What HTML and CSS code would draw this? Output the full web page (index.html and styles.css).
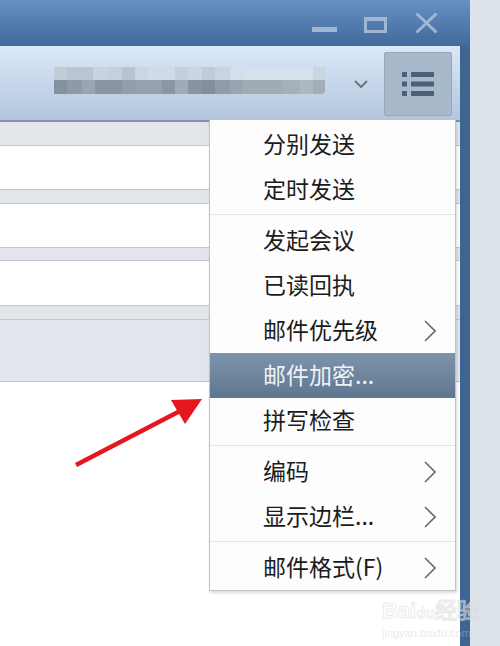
FILE: index.html
```html
<!DOCTYPE html>
<html lang="zh-CN">
<head>
  <meta charset="UTF-8" />
  <meta name="viewport" content="width=device-width, initial-scale=1.0" />
  <title>写邮件 - 更多选项</title>
  <link rel="stylesheet" href="styles.css">
</head>
<body>
  <div class="screen">
    <div class="window">
      <!-- Title bar with window buttons -->
      <div class="titlebar">
        <svg class="ctrl ctrl-min" width="28" height="26" viewBox="0 0 28 26">
          <rect x="2" y="17" width="25" height="5" />
        </svg>
        <svg class="ctrl ctrl-max" width="28" height="26" viewBox="0 0 28 26">
          <rect x="5.5" y="8.5" width="20" height="13" fill="none" stroke-width="3" />
          <rect x="4" y="7" width="23" height="4" />
        </svg>
        <svg class="ctrl ctrl-close" width="28" height="26" viewBox="0 0 28 26">
          <path d="M4.5 3.5 L24.5 22.5 M24.5 3.5 L4.5 22.5" fill="none" stroke-width="3" />
        </svg>
      </div>

      <div class="frame">
        <div class="main">
          <div class="toolbar">
            <div class="account">
              <div class="mosaic mosaic-top"></div>
              <div class="mosaic mosaic-bottom"></div>
            </div>
            <svg class="caret" width="14" height="8" viewBox="0 0 14 8">
              <path d="M1 1 L7 7 L13 1" fill="none" stroke="#6b7684" stroke-width="2" />
            </svg>
            <button class="menu-btn" title="更多">
              <svg width="66" height="62" viewBox="0 0 66 62">
                <rect x="17" y="19" width="5" height="5" />
                <rect x="26" y="19" width="23" height="5" />
                <rect x="17" y="28.5" width="5" height="5" />
                <rect x="26" y="28.5" width="23" height="5" />
                <rect x="17" y="38" width="5" height="5" />
                <rect x="26" y="38" width="23" height="5" />
              </svg>
            </button>
          </div>

          <div class="strip strip-first"></div>
          <div class="field"></div>
          <div class="strip"></div>
          <div class="field"></div>
          <div class="strip strip-thin"></div>
          <div class="field field-tall"></div>
          <div class="strip"></div>
          <div class="panel"></div>
          <div class="editor"></div>
        </div>
      </div>
    </div>
    <div class="desktop"></div>
  </div>

  <!-- Drop-down menu -->
  <ul class="menu">
    <li class="item">分别发送</li>
    <li class="item">定时发送</li>
    <li class="sep"></li>
    <li class="item">发起会议</li>
    <li class="item">已读回执</li>
    <li class="item">邮件优先级
      <svg class="chev" width="12" height="22" viewBox="0 0 12 22"><path d="M1 1 L11 11 L1 21" /></svg>
    </li>
    <li class="item active">邮件加密...</li>
    <li class="item">拼写检查</li>
    <li class="sep"></li>
    <li class="item">编码
      <svg class="chev" width="12" height="22" viewBox="0 0 12 22"><path d="M1 1 L11 11 L1 21" /></svg>
    </li>
    <li class="item">显示边栏...
      <svg class="chev" width="12" height="22" viewBox="0 0 12 22"><path d="M1 1 L11 11 L1 21" /></svg>
    </li>
    <li class="sep"></li>
    <li class="item">邮件格式(F)
      <svg class="chev" width="12" height="22" viewBox="0 0 12 22"><path d="M1 1 L11 11 L1 21" /></svg>
    </li>
  </ul>

  <!-- Red pointer arrow -->
  <svg class="arrow" width="500" height="646" viewBox="0 0 500 646">
    <line x1="76" y1="465" x2="180" y2="411" stroke="#e5161d" stroke-width="4.5" />
    <polygon points="171,400 185,424 202,399" fill="#e5161d" />
  </svg>

  <div class="watermark">
    <div class="wm-logo">Bai<span class="wm-du">du</span>经验</div>
    <div class="wm-url">jingyan.baidu.com</div>
  </div>
</body>
</html>
```

FILE: styles.css
```css
/* Reset and page */
* {
  box-sizing: border-box;
}
html, body {
  margin: 0;
}
body {
  position: relative;
  width: 500px;
  height: 646px;
  overflow: hidden;
  background: #dde3ea;
  font-family: "Noto Sans CJK SC", "Microsoft YaHei", sans-serif;
}
.screen {
  display: flex;
  height: 646px;
}
.desktop {
  flex: 1;
  background: #dde3ea;
}

/* Window */
.window {
  width: 470px;
  display: flex;
  flex-direction: column;
  background: #3e6494;
}
.titlebar {
  height: 46px;
  background: linear-gradient(#6790c2, #41699b);
  display: flex;
  justify-content: flex-end;
  align-items: flex-start;
  padding: 10px 30px 0 0;
}
.ctrl {
  fill: #a0b7d2;
  stroke: #a0b7d2;
}
.ctrl-min rect {
  stroke: none;
}
.ctrl-max {
  margin-left: 22px;
}
.ctrl-max rect + rect {
  stroke: none;
}
.ctrl-close {
  margin-left: 24px;
}
.frame {
  flex: 1;
  display: flex;
  padding-right: 10px;
}
.main {
  flex: 1;
  display: flex;
  flex-direction: column;
  background: #fff;
}

/* Toolbar */
.toolbar {
  height: 76px;
  display: flex;
  align-items: center;
  padding: 6px 8px 4px 54px;
  background: linear-gradient(#dbe8f7, #b3c6dd);
  border-bottom: 2px solid #8193a8;
}
.account {
  width: 271px;
  margin-bottom: 7px;
}
.mosaic {
  height: 13px;
}
.mosaic-top {
  background: linear-gradient(to right,
    #c2cdd9 0 13px, #b9c5d2 13px 39px, #c8d3df 39px 53px, #c4d0dc 53px 68px,
    #b6c3d1 68px 81px, #cbd6e2 81px 94px, #d0dbe7 94px 121px, #c3cfdb 121px 134px,
    #cad5e1 134px 148px, #bfcbd8 148px 161px, #c9d4e0 161px 176px, #d4dfeb 176px 189px,
    #d6e1ec 189px 259px, #cad5e0 259px 271px);
}
.mosaic-bottom {
  height: 14px;
  border-radius: 0 0 4px 0;
  background: linear-gradient(to right,
    #85919f 0 13px, #8f9aa7 13px 28px, #9aa5b1 28px 41px, #8995a3 41px 68px,
    #939eaa 68px 81px, #96a1ad 81px 108px, #8a96a4 108px 121px, #a0abb6 121px 134px,
    #8894a2 134px 148px, #828f9d 148px 161px, #919ca9 161px 176px, #9ba5b0 176px 189px,
    #a1abb6 189px 229px, #a6b0bb 229px 246px, #aeb8c3 246px 259px, #a4aeb9 259px 271px);
}
.caret {
  margin-left: 29px;
}
.menu-btn {
  width: 68px;
  height: 64px;
  margin-left: 16px;
  padding: 0;
  display: flex;
  background: #a9b9cc;
  border: 1px solid #95a6ba;
  border-radius: 2px;
}
.menu-btn svg {
  fill: #4d6079;
}

/* Compose form rows */
.strip {
  height: 14px;
  background: #e2e6ea;
  border-bottom: 1px solid #c4c7cb;
}
.strip-first {
  height: 24px;
}
.strip-thin {
  height: 13px;
}
.field {
  height: 44px;
  background: #fff;
  border-bottom: 1px solid #c4c7cb;
}
.field-tall {
  height: 45px;
}
.panel {
  height: 62px;
  background: #e1e6ec;
  border-bottom: 1px solid #bcc3cb;
}
.editor {
  flex: 1;
  background: #fff;
}

/* Drop-down menu */
.menu {
  position: absolute;
  left: 209px;
  top: 119px;
  width: 247px;
  margin: 0;
  padding: 2px 0 0;
  list-style: none;
  background: #fdfdfd;
  border: 1px solid #c2c2c2;
  box-shadow: 1px 2px 3px rgba(0, 0, 0, 0.15);
}
.item {
  height: 45px;
  display: flex;
  align-items: center;
  justify-content: space-between;
  padding: 0 19px 4px 53px;
  font-size: 23px;
  color: #1b1b1b;
}
.item .chev {
  margin-top: 4px;
}
.item.active {
  background: linear-gradient(#7e94ac, #5f7690);
  color: #eef2f7;
}
.sep {
  height: 6px;
  background: linear-gradient(transparent 2px, #e4e4e4 2px, #e4e4e4 3px, transparent 3px);
}
.chev path {
  fill: none;
  stroke: #6a6a6a;
  stroke-width: 1.6;
}

/* Annotation overlay */
.arrow {
  position: absolute;
  left: 0;
  top: 0;
  pointer-events: none;
}
.watermark {
  position: absolute;
  left: 382px;
  top: 598px;
  font-family: "Liberation Sans", Arial, sans-serif;
  color: rgba(255, 255, 255, 0.5);
  -webkit-text-stroke: 1px rgba(190, 190, 190, 0.3);
  pointer-events: none;
}
.wm-logo {
  font-size: 22px;
  font-weight: bold;
  line-height: 26px;
}
.wm-du {
  font-size: 15px;
}
.wm-url {
  font-size: 11px;
  line-height: 14px;
  -webkit-text-stroke: 0;
  color: rgba(200, 200, 200, 0.4);
}
```
